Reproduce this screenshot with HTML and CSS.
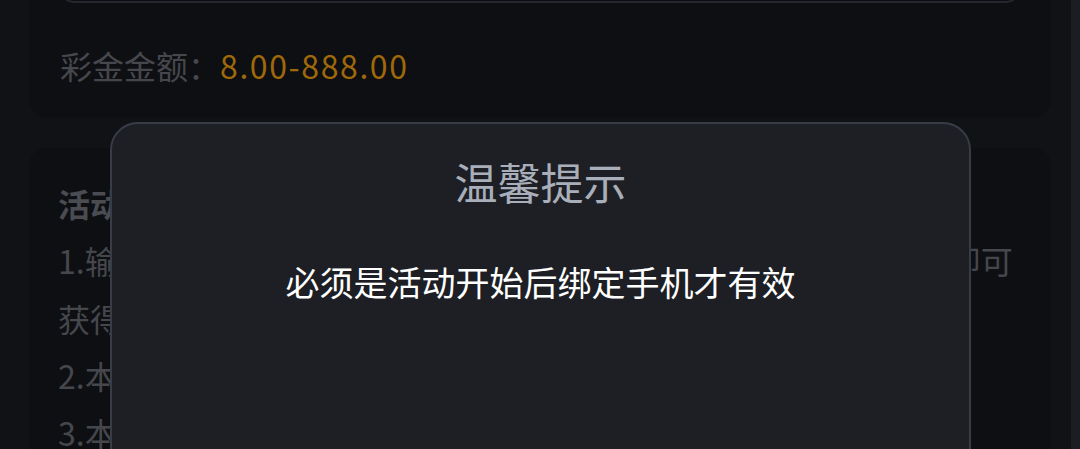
FILE: index.html
```html
<!DOCTYPE html>
<html lang="zh-CN">
<head>
    <meta charset="UTF-8">
    <meta name="viewport" content="width=device-width, initial-scale=1.0">
    <title>活动详情</title>
    <link rel="stylesheet" href="styles.css">
</head>
<body>
    <div class="page">
        <!-- Bonus Card -->
        <div class="card bonus-card">
            <div class="input-box"></div>
            <div class="amount-row">
                <span class="amount-label">彩金金额：</span><span class="amount-value">8.00-888.00</span>
            </div>
        </div>

        <!-- Rules Card -->
        <div class="card rules-card">
            <p class="rules-title">活动规则：</p>
            <p class="rule">1.输入手机号码并完成短信验证绑定，活动期间绑定成功的会员即可获得彩金奖励。</p>
            <p class="rule">2.本活动仅限新绑定手机的会员参与。</p>
            <p class="rule">3.本活动最终解释权归平台所有，如有任何疑问请联系在线客服。</p>
        </div>
    </div>

    <!-- Tip Modal -->
    <div class="modal">
        <h2 class="modal-title">温馨提示</h2>
        <p class="modal-text">必须是活动开始后绑定手机才有效</p>
    </div>
</body>
</html>
```

FILE: styles.css
```css
/* General Styling */
html, body {
    margin: 0;
    padding: 0;
    height: 100%;
    overflow: hidden;
}

body {
    font-family: "Noto Sans CJK SC", "Noto Sans", sans-serif;
    background: #111216;
    color: #45474d;
    border-right: 9px solid #1c1d23;
    box-sizing: border-box;
}

.page {
    padding: 0 20px 0 29px;
}

/* Cards */
.card {
    background: #0e0f12;
    border-radius: 18px;
}

.bonus-card {
    margin-top: -40px;
    padding: 0 31px 29px;
}

.input-box {
    height: 41px;
    border: 2px solid #25272e;
    border-top: none;
    border-radius: 0 0 14px 14px;
    background: #0e0f12;
}

.amount-row {
    margin-top: 38px;
    font-size: 32px;
    line-height: 48px;
}

.amount-label {
    color: #45474d;
}

.amount-value {
    color: #9e680b;
    letter-spacing: 1.6px;
}

.rules-card {
    margin-top: 30px;
    padding: 27px 30px 40px 29px;
}

.rules-card p {
    margin: 0;
    font-size: 32px;
    line-height: 57.3px;
}

.rules-title {
    font-weight: bold;
    color: #4a4c52;
}

/* Modal */
.modal {
    position: fixed;
    top: 122px;
    left: 110px;
    width: 857px;
    height: 420px;
    background: #1e1f24;
    border: 2px solid #373c47;
    border-radius: 28px;
    text-align: center;
}

.modal-title {
    margin: 27px 0 0;
    font-size: 43px;
    font-weight: normal;
    line-height: 60px;
    color: #a8afbb;
}

.modal-text {
    margin: 46px 0 0;
    font-size: 34px;
    line-height: 50px;
    color: #ffffff;
}
```
